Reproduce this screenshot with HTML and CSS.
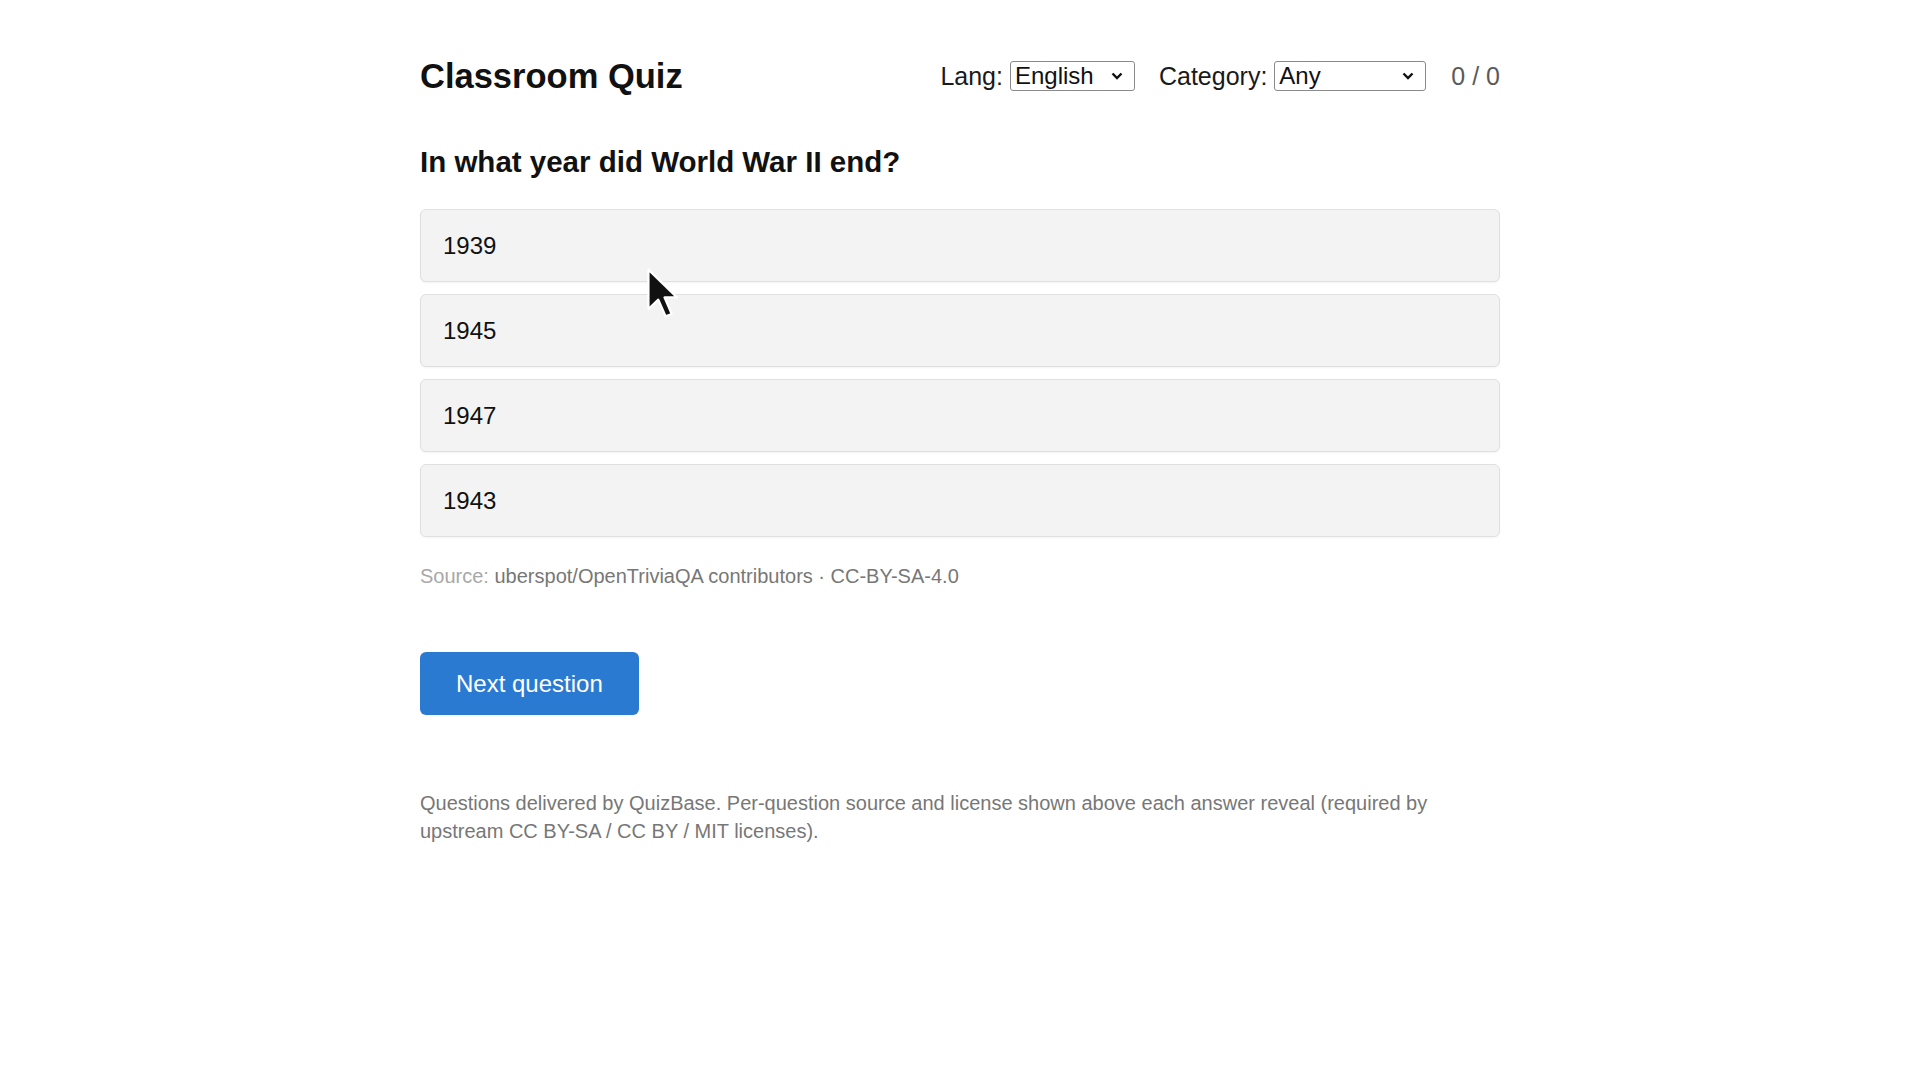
FILE: index.html
```html
<html>
<head>
<title>Classroom Quiz</title>
<meta name="viewport" content="width=device-width, initial-scale=1.0">
<link rel="stylesheet" href="styles.css">
</head>
<body>
	<div class="page">

		<div class="header">
			<h1>Classroom Quiz</h1>
			<div class="controls">
				<label class="ctl">Lang:
					<span class="pick lang">
						<select><option>English</option></select>
						<svg class="chev" width="12" height="8" viewBox="0 0 12 8"><path d="M1.5 1.5 L6 6 L10.5 1.5" fill="none" stroke="#111" stroke-width="2.4"/></svg>
					</span>
				</label>
				<label class="ctl">Category:
					<span class="pick cat">
						<select><option>Any</option></select>
						<svg class="chev" width="12" height="8" viewBox="0 0 12 8"><path d="M1.5 1.5 L6 6 L10.5 1.5" fill="none" stroke="#111" stroke-width="2.4"/></svg>
					</span>
				</label>
				<span class="score">0 / 0</span>
			</div>
		</div>

		<h2 class="question">In what year did World War II end?</h2>

		<div class="answers">
			<button class="answer">1939</button>
			<button class="answer">1945</button>
			<button class="answer">1947</button>
			<button class="answer">1943</button>
		</div>

		<p class="source"><span class="src-label">Source:</span> uberspot/OpenTriviaQA contributors · CC-BY-SA-4.0</p>

		<button class="next">Next question</button>

		<p class="footer">Questions delivered by QuizBase. Per-question source and license shown above each answer reveal (required by upstream CC BY-SA / CC BY / MIT licenses).</p>
	</div>

	<svg class="cursor" width="32" height="52" viewBox="0 0 13 21"><path d="M1 1 L1 17 L5 13.2 L8 20 L10.4 19 L7.5 12.3 L12.6 12.3 Z" fill="#111" stroke="#fff" stroke-width="0.9" stroke-linejoin="round"/></svg>
</body>
</html>
```

FILE: styles.css
```css
body{
	margin:0;
	padding:0;
	background:#fff;
	font-family:"Liberation Sans", Arial, sans-serif;
	color:#111;
}

	div.page{
		width:1080px;
		margin:0 auto;
		padding-top:55px;
	}

	div.header{
		display:flex;
		justify-content:space-between;
		align-items:center;
		height:42px;
	}

	h1{
		margin:0;
		font-size:34.5px;
		line-height:42px;
		font-weight:bold;
	}

	div.controls{
		display:flex;
		align-items:center;
		font-size:25px;
		color:#1a1a1a;
	}

	label.ctl{
		display:flex;
		align-items:center;
		gap:7px;
		margin-right:24px;
	}

	span.pick{
		position:relative;
		display:inline-block;
	}

	span.pick select{
		appearance:none;
		-webkit-appearance:none;
		display:block;
		height:30px;
		font-family:"Liberation Sans", Arial, sans-serif;
		font-size:24px;
		line-height:28px;
		color:#111;
		background:#fff;
		border:1px solid #8a8a8a;
		border-radius:3px;
		padding:0 4px;
		margin:0;
	}

	span.lang select{ width:125px; }
	span.cat select{ width:152px; }

	svg.chev{
		position:absolute;
		right:12px;
		top:11px;
		pointer-events:none;
	}

	span.score{
		color:#5a5a5a;
		margin-left:1px;
	}

	h2.question{
		margin:47px 0 0 0;
		font-size:29.5px;
		line-height:36px;
		font-weight:bold;
	}

	div.answers{
		display:flex;
		flex-direction:column;
		gap:12px;
		margin-top:29px;
	}

	button.answer{
		display:block;
		width:100%;
		height:73px;
		text-align:left;
		font-family:"Liberation Sans", Arial, sans-serif;
		font-size:24px;
		color:#111;
		background:#f3f3f3;
		border:1px solid #e0e0e0;
		border-radius:6px;
		padding:0 22px;
		box-shadow:0 1px 2px rgba(0,0,0,0.05);
	}

	p.source{
		margin:27px 0 0 0;
		font-size:20px;
		line-height:24px;
		color:#777;
	}

	span.src-label{
		color:#a8a8a8;
	}

	button.next{
		display:block;
		margin-top:64px;
		font-family:"Liberation Sans", Arial, sans-serif;
		font-size:24px;
		line-height:28px;
		padding:17.5px 36px;
		color:#fff;
		background:#2a7ad2;
		border:0;
		border-radius:6px;
	}

	p.footer{
		margin:74px 0 0 0;
		font-size:20px;
		line-height:28px;
		color:#777;
	}

	svg.cursor{
		position:absolute;
		left:646px;
		top:267px;
	}
```
